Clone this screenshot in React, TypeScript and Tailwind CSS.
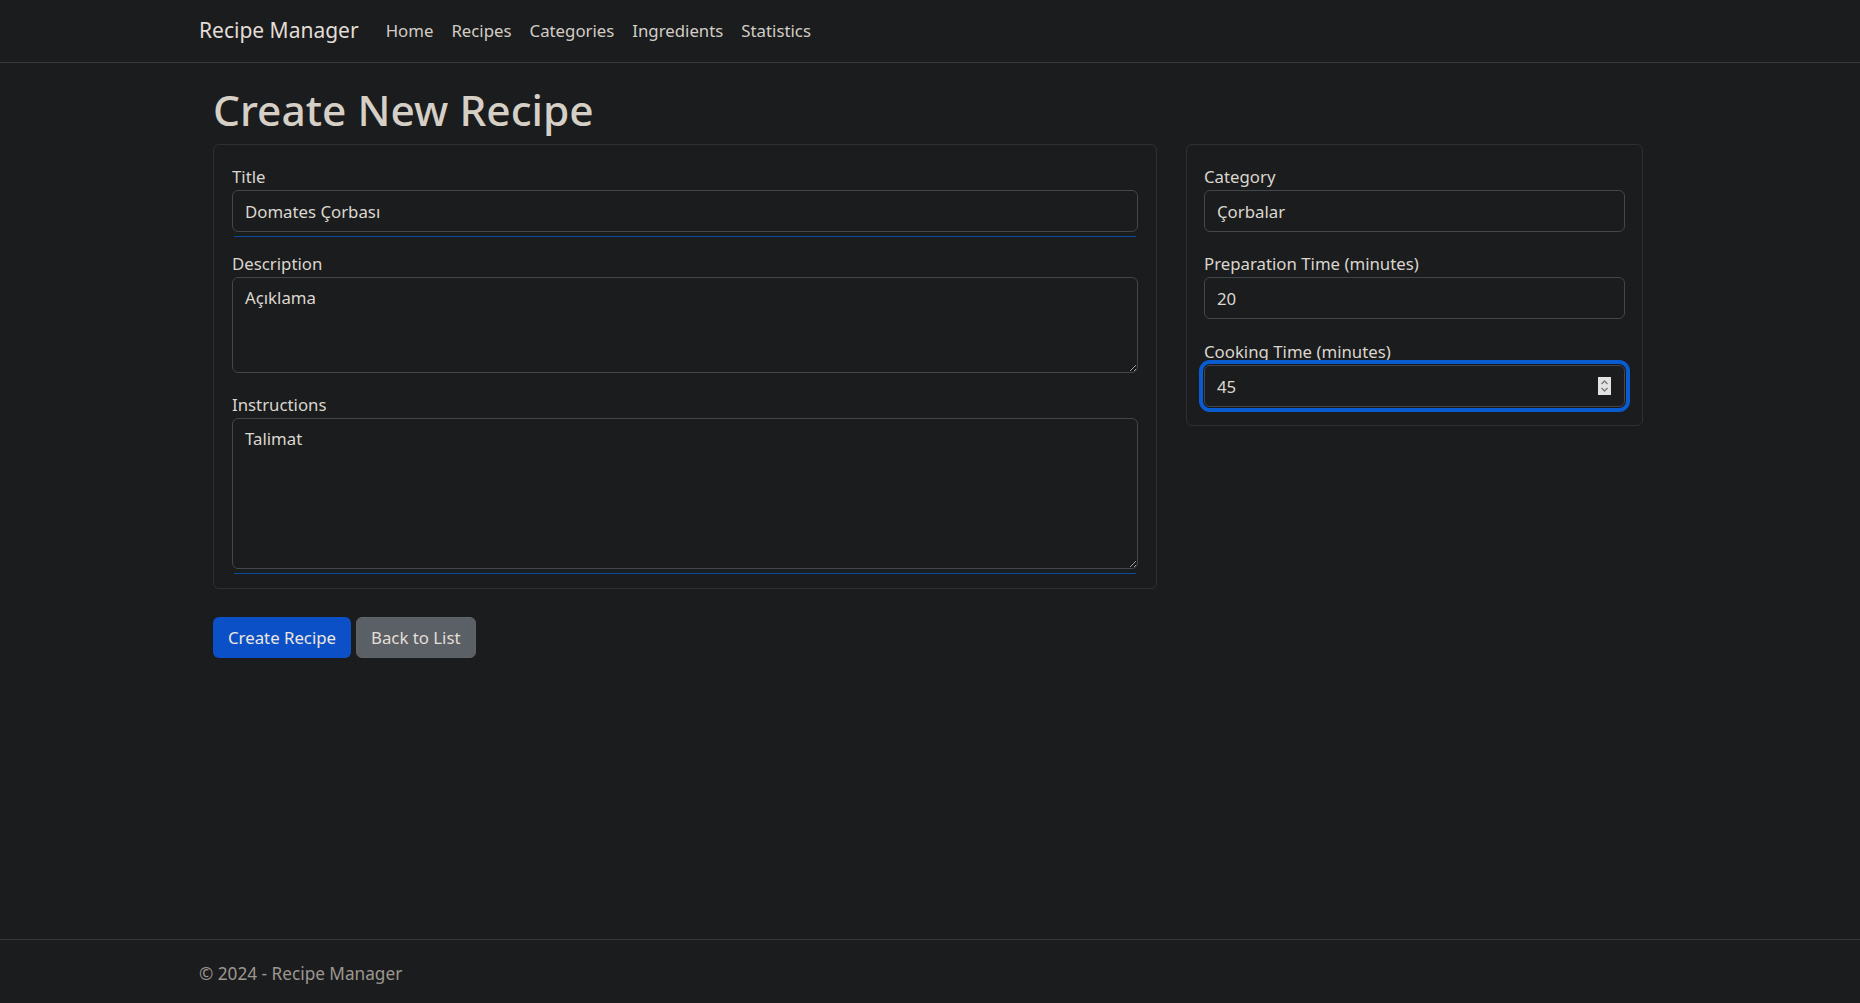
import React from 'react';

const font = { fontFamily: '"Noto Sans", "Open Sans", sans-serif' };

const Label: React.FC<{ children: React.ReactNode }> = ({ children }) => (
  <label className="block h-[27px] text-[16.8px] leading-[27px] text-[#dad5cd]">{children}</label>
);

const inputCls =
  'block w-full h-[42px] rounded-[6px] border border-[#43464a] bg-[#1b1c1e] px-[12px] text-[16.8px] text-[#dcd7cf] outline-none';

const textareaCls =
  'block w-full rounded-[6px] border border-[#43464a] bg-[#1b1c1e] px-[12px] py-[6px] text-[16.8px] leading-[27px] text-[#dcd7cf] outline-none';

// thin blue rule under some fields (validation span)
const BlueLine = () => <div className="mx-[2px] mt-[4px] h-px bg-[#0b4a9c]" />;

const App: React.FC = () => {
  return (
    <div className="min-h-screen flex flex-col bg-[#1b1c1e] text-[#dad5cd]" style={font}>
      {/* Navbar */}
      <nav className="h-[63px] border-b border-[#37393c]">
        <div className="mx-auto w-[1462px] h-full flex items-center">
          <span className="text-[21px] text-[#e2ddd6] mr-[27px]">Recipe Manager</span>
          <div className="flex gap-[18px] text-[16.8px] text-[#d2cdc5]">
            <a>Home</a>
            <a>Recipes</a>
            <a>Categories</a>
            <a>Ingredients</a>
            <a>Statistics</a>
          </div>
        </div>
      </nav>

      {/* Main */}
      <main className="flex-1">
        <div className="mx-auto w-[1434px]">
          <h1 className="mt-[22px] mb-[9px] text-[42.5px] leading-[50px] font-medium text-[#d5cfc6]">
            Create New Recipe
          </h1>

          <div className="flex gap-[29px] items-start">
            {/* Left card */}
            <div className="w-[944px] rounded-[6px] border border-[#2e3033] px-[18px] pt-[18px] pb-[14px]">
              <div className="mb-[13px]">
                <Label>Title</Label>
                <input className={inputCls} defaultValue="Domates Çorbası" />
                <BlueLine />
              </div>
              <div className="mb-[18px]">
                <Label>Description</Label>
                <textarea className={`${textareaCls} h-[96px]`} defaultValue="Açıklama" />
              </div>
              <div>
                <Label>Instructions</Label>
                <textarea className={`${textareaCls} h-[151px]`} defaultValue="Talimat" />
                <BlueLine />
              </div>
            </div>

            {/* Right card */}
            <div className="w-[457px] rounded-[6px] border border-[#2e3033] px-[17px] pt-[18px] pb-[18px]">
              <div className="mb-[18px]">
                <Label>Category</Label>
                <input className={inputCls} defaultValue="Çorbalar" />
              </div>
              <div className="mb-[19px]">
                <Label>Preparation Time (minutes)</Label>
                <input className={inputCls} defaultValue="20" />
              </div>
              <div>
                <Label>Cooking Time (minutes)</Label>
                <div className="relative">
                  <input
                    className={`${inputCls} border-[#0c3f86] shadow-[0_0_0_1px_#15171a,0_0_0_5px_#0b5bd0]`}
                    defaultValue="45"
                  />
                  <div className="absolute right-[14px] top-[12px] w-[13px] h-[18px] bg-[#e2e2e2] flex items-center justify-center">
                    <svg width="9" height="16" viewBox="0 0 9 16" fill="none" stroke="#777" strokeWidth="1.3">
                      <path d="M1.5 6 L4.5 3 L7.5 6" />
                      <path d="M1.5 10 L4.5 13 L7.5 10" />
                    </svg>
                  </div>
                </div>
              </div>
            </div>
          </div>

          {/* Buttons */}
          <div className="mt-[28px] flex gap-[5px]">
            <button className="h-[41px] px-[15px] rounded-[6px] bg-[#0b50c6] text-[16.8px] text-[#ebe7e1]">
              Create Recipe
            </button>
            <button className="h-[41px] px-[14px] rounded-[6px] bg-[#5a6065] border border-[#5f6468] text-[16.8px] text-[#e3ded7]">
              Back to List
            </button>
          </div>
        </div>
      </main>

      {/* Footer */}
      <footer className="h-[64px] border-t border-[#37393c]">
        <div className="mx-auto w-[1462px] pt-[20px] text-[17.2px] leading-[27px] text-[#9d978f]">
          © 2024 - Recipe Manager
        </div>
      </footer>
    </div>
  );
};

export default App;
